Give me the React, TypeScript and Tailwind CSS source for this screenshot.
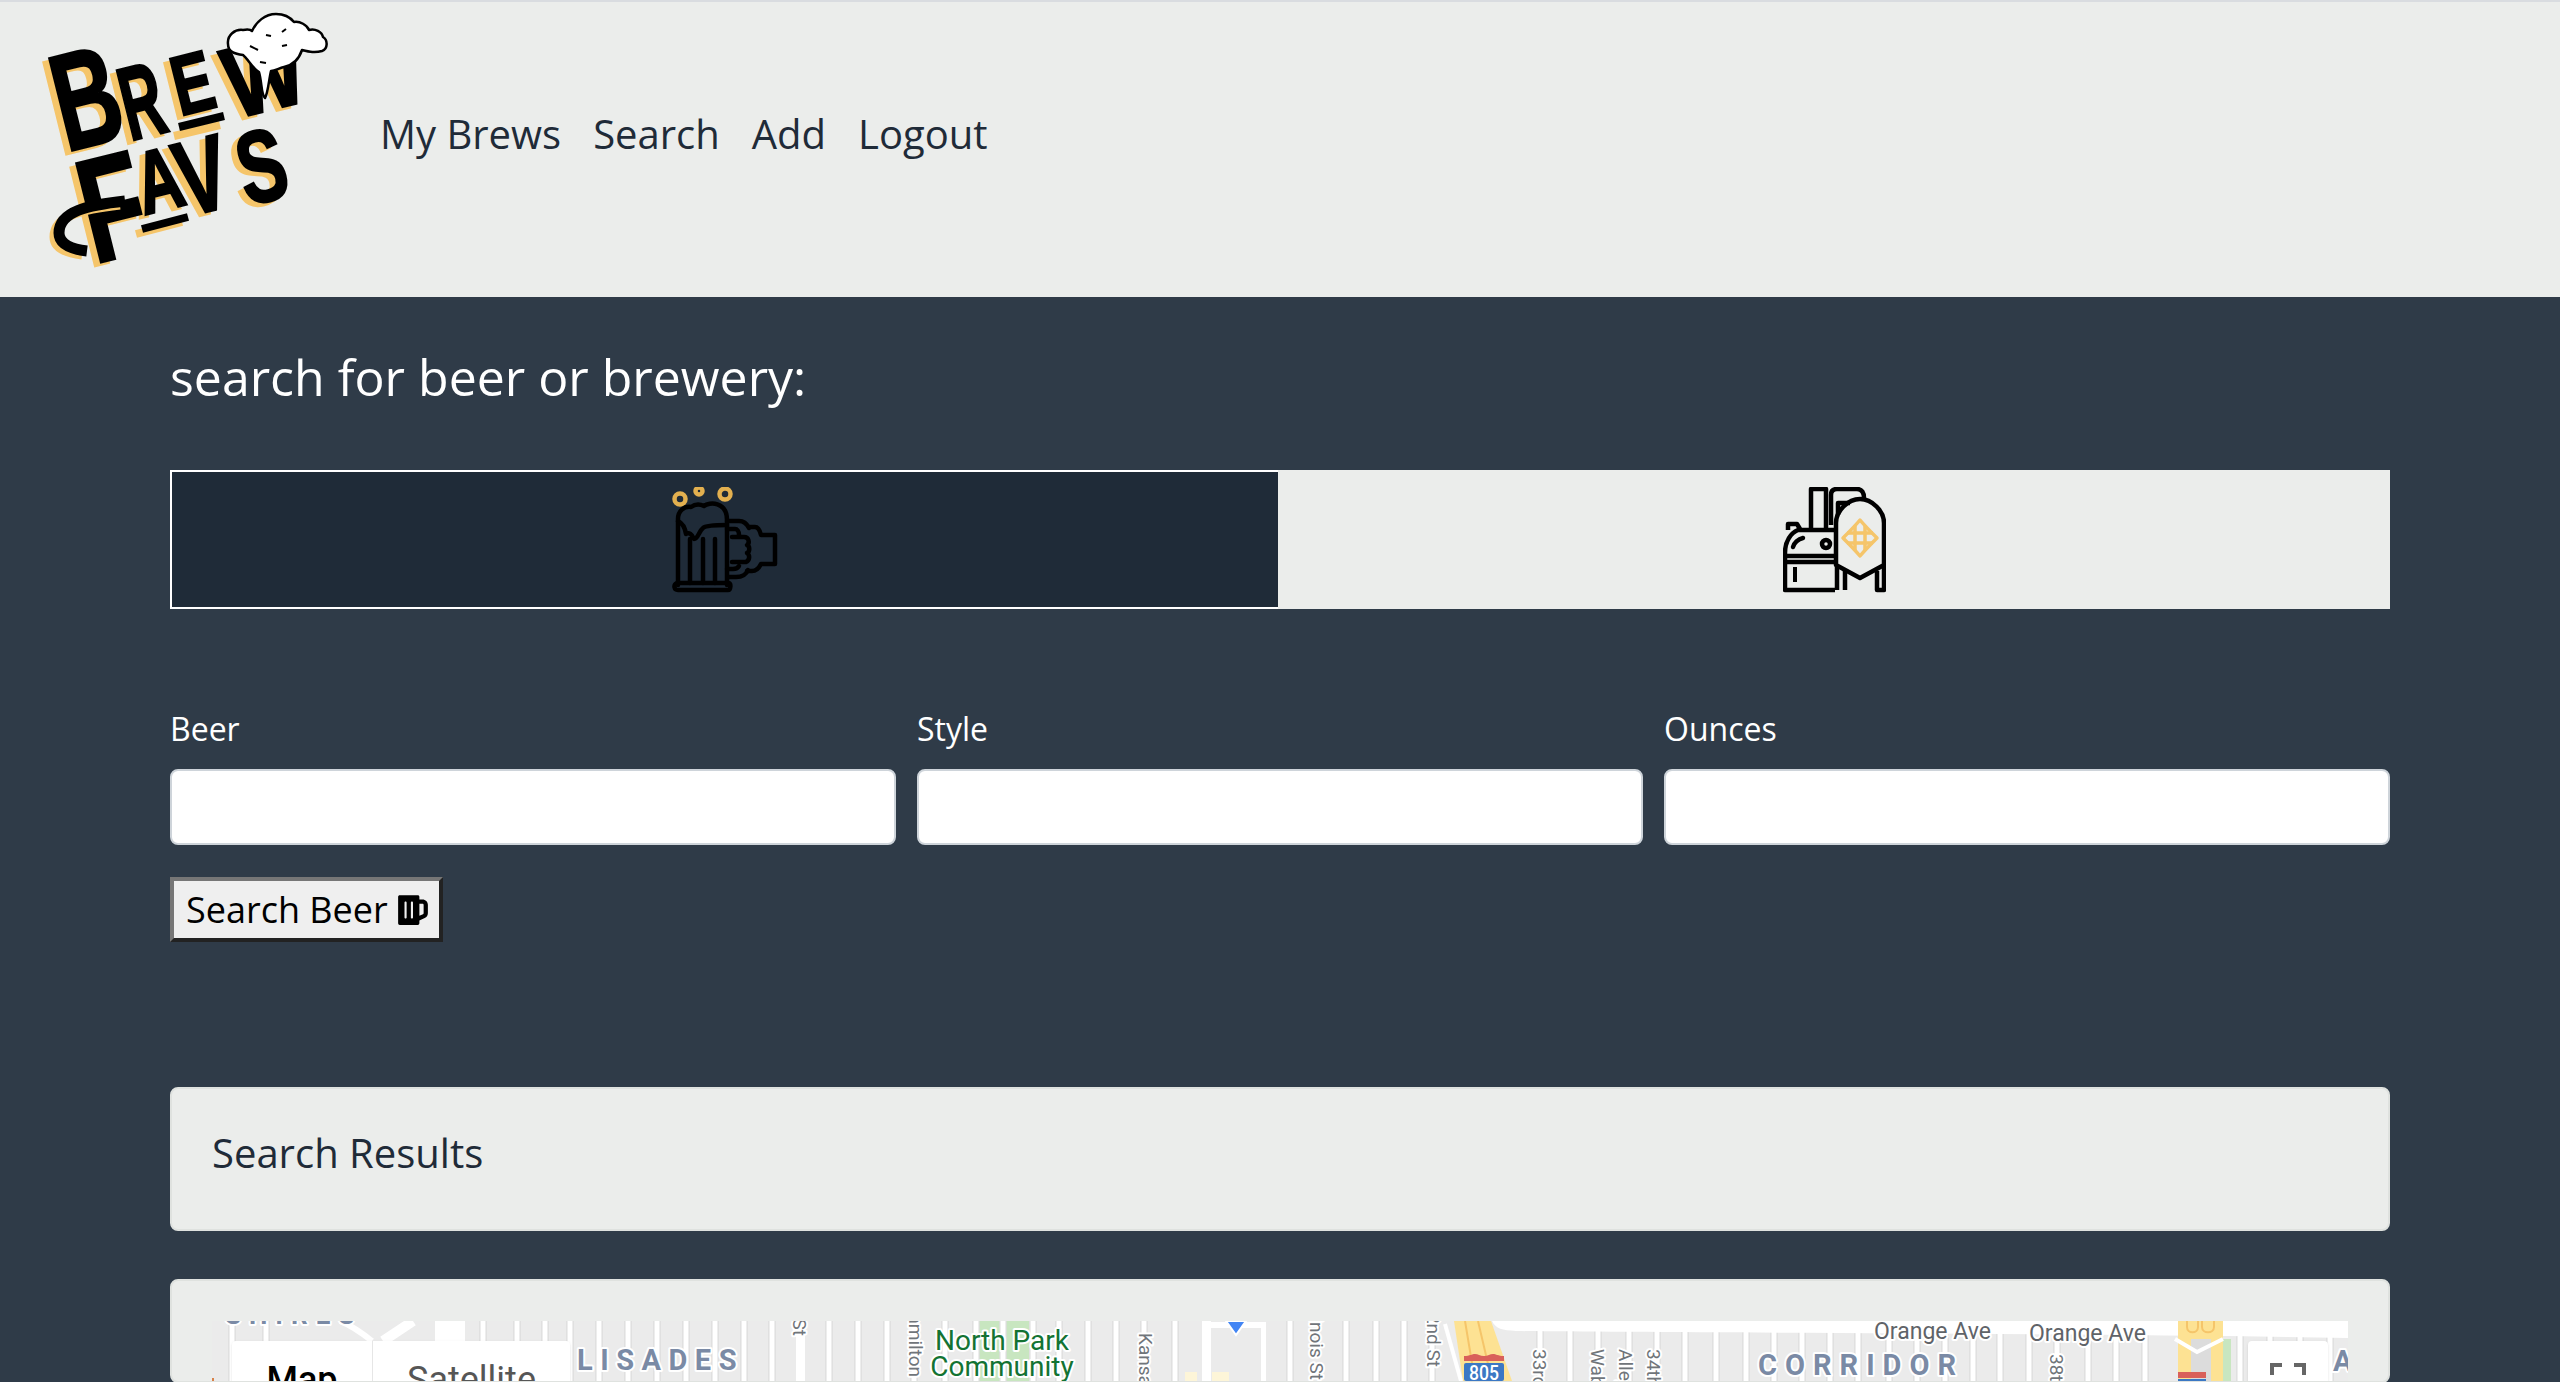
import { FaBeer } from 'react-icons/fa';

// [letter, x, baseline y, font size, horizontal squeeze]
const logoLetters: [string, number, number, number, number][] = [
  ['B', 66, 150, 138, 0.66],
  ['R', 130, 139, 104, 0.56],
  ['E', 180, 114, 84, 0.72],
  ['W', 234, 117, 100, 0.84],
  ['F', 94, 262, 148, 0.7],
  ['A', 144, 213, 88, 0.72],
  ['V', 186, 215, 106, 0.72],
  ['S', 247, 204, 102, 0.7],
];

function Logo() {
  return (
    <svg width="380" height="294" viewBox="0 0 380 294" className="block shrink-0">
      <g fontFamily="'Liberation Sans', sans-serif" fontWeight="700">
        {logoLetters.map(([ch, x, y, size, sx]) => (
          <text key={`g${ch}`} transform={`translate(${x - 6} ${y + 4}) rotate(-14) scale(${sx} 1)`} fontSize={size} fill="#f5c56a" stroke="#f5c56a" strokeWidth="2">
            {ch}
          </text>
        ))}
        {logoLetters.map(([ch, x, y, size, sx]) => (
          <text key={ch} transform={`translate(${x} ${y}) rotate(-14) scale(${sx} 1)`} fontSize={size} fill="#000" stroke="#000" strokeWidth="2.5">
            {ch}
          </text>
        ))}
      </g>
      <path d="M174 134l46-11" stroke="#f5c56a" strokeWidth="8" />
      <path d="M179 125l45-11" stroke="#000" strokeWidth="8" />
      <path d="M136 232l46-12" stroke="#f5c56a" strokeWidth="8" />
      <path d="M142 227l46-12" stroke="#000" strokeWidth="8" />
      <path d="M125 199c-36 4-66 10-66 32 0 11 12 16 28 18" fill="none" stroke="#f5c56a" strokeWidth="9" transform="translate(-5 4)" />
      <path d="M125 199c-36 4-66 10-66 32 0 11 12 16 28 18" fill="none" stroke="#000" strokeWidth="11" />
      <path
        d="M228 42c-1-9 7-15 15-14 5-1 8 0 9 1 4-9 13-17 24-17 8 0 14 3 18 8 6-1 13 3 15 8 6-2 13 2 14 7 5 3 5 12-1 14-7 2-12 1-20-1-3 9-8 15-18 17-5 1-9 4-13 4-2 8-3 22-6 27-4-3-3-16-6-26-6-3-11-13-16-17-8-1-15-3-15-11z"
        fill="#fff"
        stroke="#000"
        strokeWidth="2.5"
        strokeLinejoin="round"
      />
      <path d="M250 44l8 4M266 33l5 1M282 30l4-3M282 44l5-1M260 60l6 1" stroke="#000" strokeWidth="2" fill="none" />
    </svg>
  );
}

function MugIcon() {
  return (
    <svg width="106" height="106" viewBox="0 0 106 106" fill="none" stroke="#000" strokeWidth="4.5" strokeLinecap="round" strokeLinejoin="round" className="block">
      <g stroke="#e3b04f">
        <circle cx="8" cy="12" r="5.5" />
        <circle cx="27" cy="4" r="3.5" />
        <circle cx="53" cy="7" r="5.5" />
      </g>
      <path d="M6 98V32c0-8 6-13 13-12 4-3 9-3 13-1 5-4 23-5 23 14v65" />
      <path d="M6 34c4 2 7 6 8 13 3-2 6 0 8 5 4 0 5-8 9-11 3-3 16-3 24-3" />
      <path d="M5 96h52c2 0 2 7-1 7H6c-4 0-5-5-1-7z" />
      <path d="M18 52v44M31 52v44M43 52v44" />
      <path d="M55 34h12c4 0 8 3 10 7" />
      <path d="M55 42h8c2 0 4 2 4 6M55 82h6c3 0 5-1 6-3M56 90h8c5 0 10-2 12-7" />
      <path d="M60 50h12c5 0 6 6 3 8 3 1 3 7 0 8 3 2 3 7-1 9H60" />
      <path d="M77 40h6c3 0 5 4 6 8h14v29H89c-2 4-5 7-9 7h-5" />
    </svg>
  );
}

function TankIcon() {
  return (
    <svg width="103" height="106" viewBox="0 0 103 106" fill="none" stroke="#000" strokeWidth="4.5" strokeLinejoin="round" className="block">
      <path d="M28 43V2h15v41" />
      <path d="M48 38V8c0-4 2-6 6-6h20c5 0 7 4 7 9M55 28V16h12" />
      <path d="M2 66c0-12 6-20 13-23H52M5 43v-6h9l3 5" />
      <path d="M2 66v37h50" />
      <path d="M2 69h50M2 75h50" />
      <path d="M12 80v15" strokeWidth="4" />
      <path d="M10 60c1-4 5-8 10-9" strokeLinecap="round" />
      <circle cx="43" cy="57" r="4" />
      <path d="M53 36c0-12 12-24 24-24s24 12 24 24v42L77 91 53 78z" />
      <path d="M54 80v23M62 84v19M94 84v19h7V78" />
      <g stroke="#f5c56a" strokeWidth="3.5">
        <path d="M77 33c5 6 11 12 17 18-6 6-12 12-17 18-5-6-11-12-17-18 6-6 12-12 17-18z" />
        <path d="M72 38v26M82 38v26M64 46h26M64 56h26" />
      </g>
    </svg>
  );
}

const streets = [
  232, 266, 483, 517, 545, 570, 599, 628, 657, 686, 715, 744, 772, 829, 858, 887, 914, 945, 976, 1003, 1033, 1059, 1088,
  1116, 1144, 1175, 1290, 1346, 1376, 1404, 1432, 1540, 1570, 1598, 1629, 1657, 1685, 1716, 1746, 1774, 1802, 1830, 1858,
  1889, 1917, 1945, 1973, 2000, 2029, 2057, 2088, 2116, 2145, 2240, 2270, 2300, 2330,
];

// [label, x of baseline, y, anchor]
const sideLabels: [string, number, number, 'start' | 'end'][] = [
  ['1st St', 793, 1337, 'end'],
  ['Hamilton', 909, 1378, 'end'],
  ['Kansas St', 1139, 1334, 'start'],
  ['Illinois St', 1310, 1381, 'end'],
  ['2nd St', 1427, 1368, 'end'],
  ['33rd St', 1533, 1350, 'start'],
  ['Wabash', 1591, 1350, 'start'],
  ['Alley', 1619, 1350, 'start'],
  ['34th St', 1647, 1350, 'start'],
  ['38th St', 2050, 1355, 'start'],
];

function haloText(fill: string) {
  return { fill, stroke: '#fff', strokeWidth: 4, strokeLinejoin: 'round' as const, paintOrder: 'stroke' };
}

function MapDrawing() {
  return (
    <svg width="2136" height="60" viewBox="212 1322 2136 60" fontFamily="Roboto, sans-serif" className="block">
      <rect x="212" y="1322" width="2136" height="60" fill="#ebebeb" />
      <rect x="977" y="1322" width="52" height="60" fill="#c8e6c0" />
      <rect x="1185" y="1373" width="12" height="9" fill="#fdf5d8" />
      <rect x="1212" y="1373" width="17" height="9" fill="#fdf5d8" />
      <rect x="2223" y="1340" width="8" height="42" fill="#c8e6c0" />
      {streets.map((x) => (
        <g key={x}>
          <line x1={x} x2={x} y1="1322" y2="1382" stroke="#dcdcdc" strokeWidth="7.5" />
          <line x1={x} x2={x} y1="1322" y2="1382" stroke="#fff" strokeWidth="5" />
        </g>
      ))}
      <path d="M413 1322l-30 20M440 1322h20v60h-20z" fill="#fff" stroke="#fff" strokeWidth="10" />
      <path d="M340 1322c10 4 22 12 32 20" fill="none" stroke="#fff" strokeWidth="6" />
      <rect x="796" y="1322" width="9" height="60" fill="#fff" />
      <rect x="1202" y="1322" width="9" height="60" fill="#fff" />
      <rect x="1202" y="1323" width="63" height="6" fill="#fff" />
      <rect x="1261" y="1323" width="5" height="59" fill="#fff" />
      <path d="M1226 1322h20l-10 14z" fill="#4285f4" stroke="#fff" strokeWidth="2" />
      <path d="M1454 1322h37l21 60h-49z" fill="#fde293" />
      <path d="M1465 1322l10 60M1478 1322l14 60" stroke="#f5c56a" strokeWidth="2" />
      <path d="M1445 1325l16 57" stroke="#fff" strokeWidth="4" />
      <path d="M1492 1322c4 8 10 9 24 10 120 2 580 2 832 7v-17z" fill="#fff" />
      <path d="M1464 1362l0-5c6 0 8-2 11-2 3 0 5 2 9 2 4 0 6-2 9-2 3 0 5 2 11 2v5z" fill="#d9605a" />
      <rect x="1464" y="1364" width="40" height="18" rx="2" fill="#3b78c4" />
      <text x="1484" y="1381" fill="#fff" fontSize="21" fontWeight="500" textAnchor="middle" textLength="30" lengthAdjust="spacingAndGlyphs">805</text>
      <rect x="2178" y="1322" width="45" height="60" fill="#fde293" />
      <rect x="2191" y="1340" width="20" height="42" fill="#dcdcdc" />
      <path d="M2187 1322v6c0 7 11 7 11 0v-6M2202 1322v6c0 7 12 7 12 0v-6" fill="#fde293" stroke="#f5c56a" strokeWidth="2" />
      <path d="M2175 1340l22 13 26-13" fill="none" stroke="#fff" strokeWidth="4" />
      <rect x="2178" y="1373" width="28" height="6" fill="#d9605a" />
      <rect x="2178" y="1380" width="28" height="2" fill="#3b78c4" />
      <rect x="212" y="1379" width="2" height="3" fill="#d8824a" />
      {sideLabels.map(([label, x, y, anchor]) => (
        <text key={label} transform={`translate(${x} ${y}) rotate(90)`} textAnchor={anchor} fontSize="19" {...haloText('#70757a')}>
          {label}
        </text>
      ))}
      <text x="225" y="1325" fontSize="26" fontWeight="700" letterSpacing="8" {...haloText('#7a8aa5')}>SHIRES</text>
      <text x="577" y="1371" fontSize="29" fontWeight="700" letterSpacing="7.5" {...haloText('#7a8aa5')}>LISADES</text>
      <text x="1758" y="1376" fontSize="29" fontWeight="700" letterSpacing="8" {...haloText('#7a8aa5')}>CORRIDOR</text>
      <text x="2333" y="1372" fontSize="29" fontWeight="700" {...haloText('#7a8aa5')}>A</text>
      <text x="1002" y="1351" fontSize="28" textAnchor="middle" {...haloText('#137333')}>North Park</text>
      <text x="1002" y="1377" fontSize="28" textAnchor="middle" {...haloText('#137333')}>Community</text>
      <text x="1874" y="1340" fontSize="23" {...haloText('#5f6368')}>Orange Ave</text>
      <text x="2029" y="1342" fontSize="23" {...haloText('#5f6368')}>Orange Ave</text>
    </svg>
  );
}

function MapPeek() {
  return (
    <div className="relative h-[60px] overflow-hidden font-['Roboto',sans-serif]">
      <MapDrawing />
      <div className="absolute left-[20px] top-[20px] flex w-[338px] rounded-t-[4px] bg-white shadow">
        <div className="w-[140px] pt-[19px] text-center text-[36px] font-medium leading-[40px] text-black">Map</div>
        <div className="flex-1 border-l border-[#e6e6e6] pt-[19px] text-center text-[36px] leading-[40px] text-[#565656]">Satellite</div>
      </div>
      <div className="absolute left-[2036px] top-[20px] h-[40px] w-[80px] rounded-t-[4px] bg-white shadow">
        <div className="absolute left-[22px] top-[22px] h-[12px] w-[12px] border-l-[4px] border-t-[4px] border-[#666]" />
        <div className="absolute left-[46px] top-[22px] h-[12px] w-[12px] border-r-[4px] border-t-[4px] border-[#666]" />
      </div>
    </div>
  );
}

export default function App() {
  return (
    <div className="h-[1382px] overflow-hidden bg-[#2f3b48] font-['Open_Sans',sans-serif] text-[#1f2b38]">
      <nav className="flex h-[297px] items-start border-t-2 border-[#d9dce0] bg-[#ebedeb]">
        <Logo />
        <div className="mt-[105px] flex gap-[32px] text-[40px] leading-[54px]">
          <a>My Brews</a>
          <a>Search</a>
          <a>Add</a>
          <a>Logout</a>
        </div>
      </nav>

      <main className="mx-[170px]">
        <h2 className="mb-[60px] mt-[47px] text-[50px] leading-[66px] text-white">search for beer or brewery:</h2>

        <div className="flex h-[139px]">
          <div className="flex w-[1108px] items-center justify-center border-2 border-r-0 border-white bg-[#1f2b38]">
            <MugIcon />
          </div>
          <div className="flex flex-1 items-center justify-center bg-[#ebedeb]">
            <TankIcon />
          </div>
        </div>

        <div className="mt-[98px] grid grid-cols-3 gap-[21px]">
          {['Beer', 'Style', 'Ounces'].map((label) => (
            <div key={label}>
              <label className="mb-[18px] block text-[32px] leading-[44px] text-white">{label}</label>
              <input className="block h-[76px] w-full rounded-[8px] border-2 border-[#ced4da] bg-white" />
            </div>
          ))}
        </div>

        <button className="mt-[32px] flex h-[65px] w-[273px] items-center gap-[8px] whitespace-nowrap border-4 border-b-[#222] border-l-[#767676] border-r-[#222] border-t-[#767676] bg-[#efefef] pl-[12px] text-[36px] text-black">
          Search Beer
          <FaBeer size={34} className="shrink-0" />
        </button>

        <div className="mt-[145px] h-[144px] rounded-[8px] border-2 border-[#dfe2df] bg-[#ebedeb] px-[40px] pt-[36px] text-[40px] leading-[56px]">Search Results</div>

        <div className="mt-[48px] rounded-[8px] border-2 border-[#dfe2df] bg-[#ebedeb] pl-[40px] pt-[40px]">
          <MapPeek />
        </div>
      </main>
    </div>
  );
}
